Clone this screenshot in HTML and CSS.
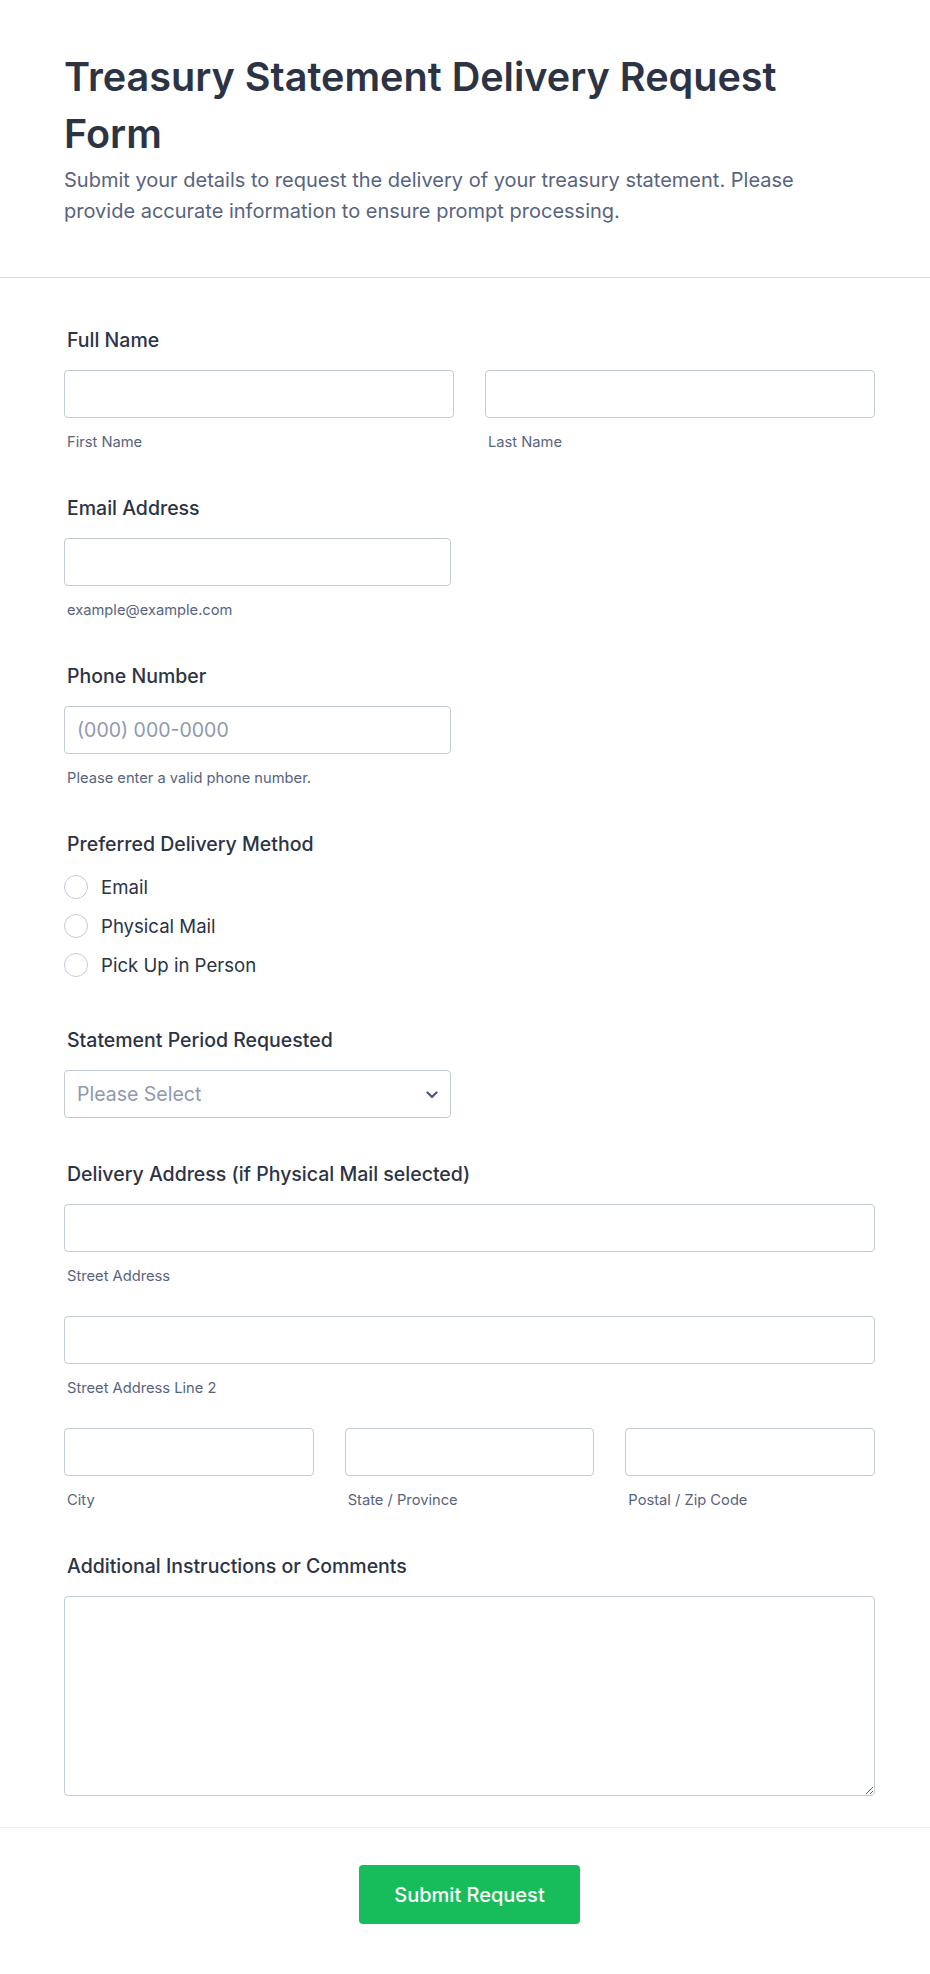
FILE: index.html
```html
<!DOCTYPE html>
<html lang="en">
<head>
    <meta charset="UTF-8">
    <meta name="viewport" content="width=device-width, initial-scale=1.0">
    <title>Treasury Statement Delivery Request Form</title>
    <link rel="stylesheet" href="styles.css">
</head>
<body>
    <header class="form-header">
        <h1>Treasury Statement Delivery Request Form</h1>
        <p class="form-description">Submit your details to request the delivery of your treasury statement. Please provide accurate information to ensure prompt processing.</p>
    </header>

    <form class="form-body" onsubmit="return false">
        <div class="field">
            <label class="field-label">Full Name</label>
            <div class="row row-2">
                <div class="sub-field">
                    <input type="text" id="firstName">
                    <label class="sub-label" for="firstName">First Name</label>
                </div>
                <div class="sub-field">
                    <input type="text" id="lastName">
                    <label class="sub-label" for="lastName">Last Name</label>
                </div>
            </div>
        </div>

        <div class="field">
            <label class="field-label" for="email">Email Address</label>
            <div class="half">
                <input type="email" id="email">
                <span class="sub-label">example@example.com</span>
            </div>
        </div>

        <div class="field">
            <label class="field-label" for="phone">Phone Number</label>
            <div class="half">
                <input type="tel" id="phone" placeholder="(000) 000-0000">
                <span class="sub-label">Please enter a valid phone number.</span>
            </div>
        </div>

        <div class="field">
            <span class="field-label">Preferred Delivery Method</span>
            <div class="radio-list">
                <label class="radio"><input type="radio" name="method" value="email"> Email</label>
                <label class="radio"><input type="radio" name="method" value="mail"> Physical Mail</label>
                <label class="radio"><input type="radio" name="method" value="pickup"> Pick Up in Person</label>
            </div>
        </div>

        <div class="field">
            <label class="field-label" for="period">Statement Period Requested</label>
            <div class="half select-wrap">
                <select id="period">
                    <option value="">Please Select</option>
                    <option>Monthly</option>
                    <option>Quarterly</option>
                    <option>Annually</option>
                </select>
                <svg class="chevron" width="12" height="8" viewBox="0 0 12 8"><path d="M1.5 1.5 6 6l4.5-4.5" fill="none" stroke="#4f5b72" stroke-width="2.2" stroke-linecap="round" stroke-linejoin="round"/></svg>
            </div>
        </div>

        <div class="field">
            <span class="field-label">Delivery Address (if Physical Mail selected)</span>
            <div class="sub-field address-line">
                <input type="text" id="street1">
                <label class="sub-label" for="street1">Street Address</label>
            </div>
            <div class="sub-field address-line">
                <input type="text" id="street2">
                <label class="sub-label" for="street2">Street Address Line 2</label>
            </div>
            <div class="row row-3">
                <div class="sub-field">
                    <input type="text" id="city">
                    <label class="sub-label" for="city">City</label>
                </div>
                <div class="sub-field">
                    <input type="text" id="state">
                    <label class="sub-label" for="state">State / Province</label>
                </div>
                <div class="sub-field">
                    <input type="text" id="zip">
                    <label class="sub-label" for="zip">Postal / Zip Code</label>
                </div>
            </div>
        </div>

        <div class="field">
            <label class="field-label" for="comments">Additional Instructions or Comments</label>
            <textarea id="comments"></textarea>
        </div>
    </form>

    <footer class="form-footer">
        <button type="button" class="submit-btn">Submit Request</button>
    </footer>
</body>
</html>
```

FILE: styles.css
```css
:root {
    --text-dark: #2c3345;
    --text-muted: #57647e;
    --placeholder: #8f99ad;
    --border: #c3cad8;
    --divider: #dadcea;
    --green: #18bd5b;
}

* {
    margin: 0;
    padding: 0;
    box-sizing: border-box;
}

body {
    font-family: 'Inter', 'Noto Sans', sans-serif;
    color: var(--text-dark);
    background: #fff;
}

.form-header {
    padding: 49px 64px 50px 64px;
    border-bottom: 1px solid var(--divider);
}

h1 {
    font-size: 39.6px;
    line-height: 57px;
    font-weight: 600;
    color: var(--text-dark);
}

.form-description {
    margin-top: 2px;
    font-size: 20px;
    line-height: 31px;
    color: var(--text-muted);
}

.form-body {
    padding: 50px 55px 31px 64px;
    border-bottom: 1px solid #eeeff3;
}

.field {
    margin-bottom: 44px;
}

.field:last-child {
    margin-bottom: 0;
}

.field-label {
    display: block;
    padding-left: 3px;
    font-size: 19.5px;
    line-height: 24px;
    font-weight: 500;
    margin-bottom: 18px;
}

input[type="text"],
input[type="email"],
input[type="tel"],
select,
textarea {
    display: block;
    width: 100%;
    height: 48px;
    padding: 0 12px;
    border: 1px solid var(--border);
    border-radius: 4px;
    font-family: inherit;
    font-size: 19.5px;
    color: var(--text-dark);
    background: #fff;
    outline: none;
}

input::placeholder {
    color: var(--placeholder);
}

.sub-label {
    display: block;
    margin-top: 14px;
    padding-left: 3px;
    font-size: 14.7px;
    line-height: 20px;
    color: var(--text-muted);
}

.row {
    display: grid;
    gap: 31px;
}

.row-2 {
    grid-template-columns: 1fr 1fr;
}

.row-3 {
    grid-template-columns: 1fr 1fr 1fr;
}

.half {
    width: 387px;
}

.address-line {
    margin-bottom: 30px;
}

.radio-list {
    margin-top: -7px;
}

.radio {
    display: flex;
    align-items: center;
    gap: 13px;
    height: 39px;
    font-size: 18.6px;
}

.radio input {
    appearance: none;
    flex: none;
    width: 24px;
    height: 24px;
    border: 1px solid var(--border);
    border-radius: 50%;
    background: #fff;
    margin: 0;
}

.radio input:checked {
    border: 6px solid var(--green);
}

.select-wrap {
    position: relative;
}

select {
    appearance: none;
    color: var(--placeholder);
    padding-right: 36px;
}

.chevron {
    position: absolute;
    right: 13px;
    top: 21px;
    pointer-events: none;
}

textarea {
    height: 200px;
    padding: 12px;
    resize: vertical;
}

.form-footer {
    display: flex;
    justify-content: center;
    padding: 37px 55px 50px 64px;
}

.submit-btn {
    width: 221px;
    height: 59px;
    border: none;
    border-radius: 4px;
    background: var(--green);
    color: #fff;
    font-family: inherit;
    font-size: 20px;
    font-weight: 500;
    cursor: pointer;
}

.submit-btn:hover {
    background: #15a951;
}
```
